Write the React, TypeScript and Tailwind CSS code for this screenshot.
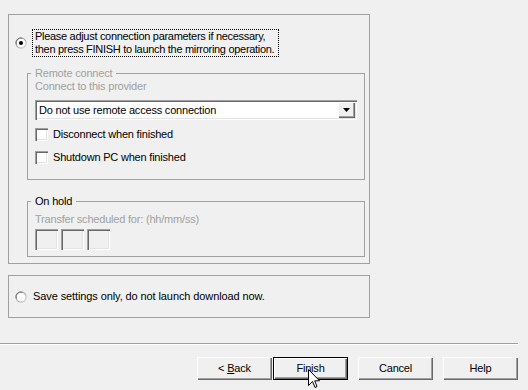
import type { ReactNode } from 'react';

const raised =
  'shadow-[inset_1px_1px_0_#ffffff,inset_-1px_-1px_0_#696969,inset_-2px_-2px_0_#a0a0a0]';
const sunken =
  'shadow-[inset_1px_1px_0_#a0a0a0,inset_2px_2px_0_#696969,inset_-1px_-1px_0_#ffffff,inset_-2px_-2px_0_#e3e3e3]';

function Radio({ checked }: { checked?: boolean }) {
  return (
    <svg width="12" height="12" viewBox="0 0 12 12" className="shrink-0">
      <circle cx="6" cy="6" r="5.5" fill="#a0a0a0" />
      <circle cx="6" cy="6" r="4.5" fill="#ffffff" />
      <path d="M1.2 7.5 A5 5 0 0 1 7.5 1.2" stroke="#696969" strokeWidth="1" fill="none" />
      <path d="M10.8 4.5 A5 5 0 0 1 4.5 10.8" stroke="#e3e3e3" strokeWidth="1" fill="none" />
      {checked && <circle cx="6" cy="6" r="2" fill="#000000" />}
    </svg>
  );
}

function Checkbox() {
  return <div className={`w-[13px] h-[13px] bg-white shrink-0 ${sunken}`} />;
}

function Group({
  label,
  muted,
  className,
  children,
}: {
  label: string;
  muted?: boolean;
  className?: string;
  children: ReactNode;
}) {
  return (
    <fieldset className={`border border-[#a0a0a0] ${className ?? ''}`}>
      <legend
        className={`ml-[3px] px-[4px] leading-[13px] whitespace-nowrap ${
          muted ? 'text-[#a0a0a0]' : 'text-black'
        }`}
      >
        {label}
      </legend>
      {children}
    </fieldset>
  );
}

function Button({ label, isDefault }: { label: ReactNode; isDefault?: boolean }) {
  return (
    <button
      className={`w-[75px] h-[23px] bg-[#f0f0f0] text-black text-[11px] leading-[13px] ${
        isDefault ? `border border-black ${raised}` : raised
      }`}
    >
      {label}
    </button>
  );
}

function Cursor() {
  return (
    <svg
      width="12"
      height="20"
      viewBox="0 0 12 20"
      className="absolute left-[308px] top-[369px]"
    >
      <path
        d="M0.5 0.5 L0.5 16.5 L4.5 12.5 L7 18.5 L9 17.5 L6.7 11.8 L11.5 11.8 Z"
        fill="#ffffff"
        stroke="#000000"
        strokeWidth="1"
      />
    </svg>
  );
}

export default function App() {
  return (
    <div
      className="relative w-[528px] h-[390px] bg-[#f0f0f0] text-[11px] leading-[13px] tracking-[-0.2px] text-black overflow-hidden whitespace-nowrap"
      style={{ fontFamily: '"Liberation Sans", Arial, sans-serif' }}
    >
      <div className="pt-[14px] pl-[8px]">
        {/* Launch option */}
        <div className="w-[362px] h-[250px] border border-[#a0a0a0] pt-[14px]">
          <div className="flex items-center pl-[6px] gap-[5px]">
            <Radio checked />
            <div className="w-[247px] h-[28px] border border-dotted border-black px-[2px] flex flex-col justify-center tracking-[-0.3px]">
              <div>Please adjust connection parameters if necessary,</div>
              <div>then press FINISH to launch the mirroring operation.</div>
            </div>
          </div>

          <Group label="Remote connect" muted className="ml-[18px] mt-[10px] w-[338px] h-[113px]">
            <div className="pl-[7px]">
              <div className="text-[#a0a0a0]">Connect to this provider</div>
              <div className={`mt-[7px] w-[322px] h-[20px] bg-white flex items-center ${sunken}`}>
                <span className="flex-1 pl-[4px]">Do not use remote access connection</span>
                <div
                  className={`w-[17px] h-[16px] mr-[2px] bg-[#f0f0f0] flex items-center justify-center ${raised}`}
                >
                  <svg width="7" height="4" viewBox="0 0 7 4">
                    <path d="M0 0 H7 L3.5 4 Z" fill="#000000" />
                  </svg>
                </div>
              </div>
              <div className="mt-[8px] flex items-center gap-[5px]">
                <Checkbox />
                <span>Disconnect when finished</span>
              </div>
              <div className="mt-[10px] flex items-center gap-[5px]">
                <Checkbox />
                <span>Shutdown PC when finished</span>
              </div>
            </div>
          </Group>

          <Group label="On hold" className="ml-[18px] mt-[15px] w-[338px] h-[62px]">
            <div className="pl-[7px] pt-[5px]">
              <div className="text-[#a0a0a0]">Transfer scheduled for: (hh/mm/ss)</div>
              <div className="mt-[3px] flex gap-[3px]">
                <div className={`w-[23px] h-[21px] ${sunken} bg-[#f0f0f0]`} />
                <div className={`w-[23px] h-[21px] ${sunken} bg-[#f0f0f0]`} />
                <div className={`w-[23px] h-[21px] ${sunken} bg-[#f0f0f0]`} />
              </div>
            </div>
          </Group>
        </div>

        {/* Save only option */}
        <div className="mt-[11px] w-[362px] h-[43px] border border-[#a0a0a0] flex items-center pl-[6px] gap-[6px]">
          <Radio />
          <span className="tracking-[-0.1px]">Save settings only, do not launch download now.</span>
        </div>
      </div>

      <div className="mt-[25px] w-[518px] h-[2px] border-t border-[#a0a0a0] border-b border-b-white" />

      <div className="mt-[12px] flex justify-end pr-[10px]">
        <div className="flex gap-[1px]">
          <Button
            label={
              <>
                &lt; <span className="underline">B</span>ack
              </>
            }
          />
          <Button label="Finish" isDefault />
        </div>
        <div className="ml-[10px]">
          <Button label="Cancel" />
        </div>
        <div className="ml-[10px]">
          <Button label="Help" />
        </div>
      </div>

      <Cursor />
    </div>
  );
}
